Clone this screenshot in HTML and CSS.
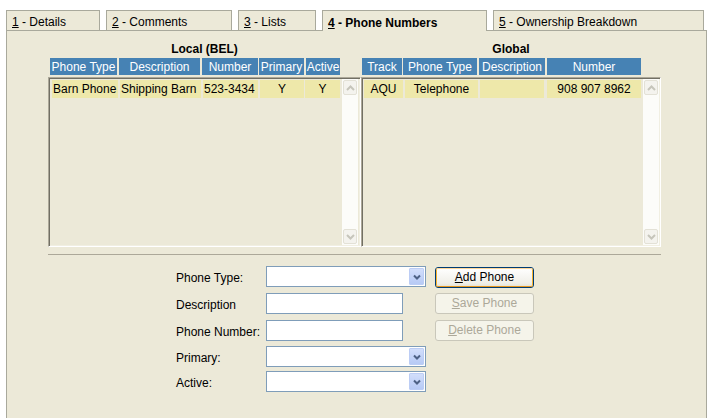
FILE: index.html
```html
<!DOCTYPE html>
<html>
<head>
<meta charset="utf-8">
<link rel="stylesheet" href="styles.css">
</head>
<body>
<div class="tabs">
  <div class="tab t1"><u>1</u> - Details</div>
  <div class="tab t2"><u>2</u> - Comments</div>
  <div class="tab t3"><u>3</u> - Lists</div>
  <div class="tab t4 active"><u>4</u> - Phone Numbers</div>
  <div class="tab t5"><u>5</u> - Ownership Breakdown</div>
</div>
<div class="panel">
  <div class="lists">
    <section class="group local">
      <h3 class="title">Local (BEL)</h3>
      <div class="heads">
        <div class="h w-pt">Phone Type</div>
        <div class="h w-desc">Description</div>
        <div class="h w-num">Number</div>
        <div class="h w-pri">Primary</div>
        <div class="h w-act">Active</div>
      </div>
      <div class="box">
        <div class="rows">
          <div class="row">
            <div class="c r-pt">Barn Phone</div>
            <div class="c r-desc">Shipping Barn</div>
            <div class="c r-num">523-3434</div>
            <div class="c r-pri ctr">Y</div>
            <div class="c r-act ctr">Y</div>
          </div>
        </div>
        <div class="vscroll">
          <div class="sbtn"><svg width="9" height="6" viewBox="0 0 9 6"><path d="M1 5 L4.5 1.5 L8 5" fill="none" stroke="#c6c5bb" stroke-width="2"/></svg></div>
          <div class="sbtn"><svg width="9" height="6" viewBox="0 0 9 6"><path d="M1 1 L4.5 4.5 L8 1" fill="none" stroke="#c6c5bb" stroke-width="2"/></svg></div>
        </div>
      </div>
    </section>
    <section class="group global">
      <h3 class="title">Global</h3>
      <div class="heads">
        <div class="h g-tr">Track</div>
        <div class="h g-pt">Phone Type</div>
        <div class="h g-desc">Description</div>
        <div class="h g-num">Number</div>
      </div>
      <div class="box">
        <div class="rows">
          <div class="row">
            <div class="c gr-tr ctr">AQU</div>
            <div class="c gr-pt ctr">Telephone</div>
            <div class="c gr-desc ctr"></div>
            <div class="c gr-num ctr">908 907 8962</div>
          </div>
        </div>
        <div class="vscroll narrow">
          <div class="sbtn"><svg width="9" height="6" viewBox="0 0 9 6"><path d="M1 5 L4.5 1.5 L8 5" fill="none" stroke="#c6c5bb" stroke-width="2"/></svg></div>
          <div class="sbtn"><svg width="9" height="6" viewBox="0 0 9 6"><path d="M1 1 L4.5 4.5 L8 1" fill="none" stroke="#c6c5bb" stroke-width="2"/></svg></div>
        </div>
      </div>
    </section>
  </div>
  <div class="sep"></div>
  <div class="form">
    <label class="lbl">Phone Type:</label>
    <div class="combo"><span class="drop"><svg width="8" height="6" viewBox="0 0 8 6"><path d="M1 1.5 L4 4.5 L7 1.5" fill="none" stroke="#4d6185" stroke-width="2"/></svg></span></div>
    <button class="btn default"><span class="inner"><u>A</u>dd Phone</span></button>

    <label class="lbl">Description</label>
    <div class="field"></div>
    <button class="btn disabled"><span class="inner"><u>S</u>ave Phone</span></button>

    <label class="lbl">Phone Number:</label>
    <div class="field"></div>
    <button class="btn disabled"><span class="inner"><u>D</u>elete Phone</span></button>

    <label class="lbl">Primary:</label>
    <div class="combo"><span class="drop"><svg width="8" height="6" viewBox="0 0 8 6"><path d="M1 1.5 L4 4.5 L7 1.5" fill="none" stroke="#4d6185" stroke-width="2"/></svg></span></div>
    <span></span>

    <label class="lbl">Active:</label>
    <div class="combo"><span class="drop"><svg width="8" height="6" viewBox="0 0 8 6"><path d="M1 1.5 L4 4.5 L7 1.5" fill="none" stroke="#4d6185" stroke-width="2"/></svg></span></div>
    <span></span>
  </div>
</div>
</body>
</html>
```
FILE: styles.css
```css
html, body {
  margin: 0;
  padding: 0;
}
body {
  width: 712px;
  height: 418px;
  overflow: hidden;
  background: #ffffff;
  font-family: "Liberation Sans", Arial, sans-serif;
  font-size: 12px;
  color: #000;
}
.tabs {
  display: flex;
  align-items: flex-end;
  gap: 6px;
  height: 30px;
  padding-left: 6px;
  box-sizing: border-box;
}
.tab {
  height: 20px;
  box-sizing: border-box;
  border: 1px solid #a9a99c;
  border-bottom: none;
  background: #ece9d8;
  padding: 4px 0 0 5px;
  line-height: 14px;
  white-space: nowrap;
}
.t1 { width: 94px; }
.t2 { width: 126px; }
.t3 { width: 78px; }
.t4 { width: 165px; }
.t5 { width: 211px; }
.tab.active {
  height: 21px;
  margin-bottom: -1px;
  position: relative;
  z-index: 2;
  font-weight: bold;
  padding-top: 5px;
}
.panel {
  margin-left: 6px;
  width: 701px;
  height: 400px;
  box-sizing: border-box;
  border: 1px solid #a9a99c;
  background: #ece9d8;
  position: relative;
  z-index: 1;
}
.lists {
  display: flex;
  padding-left: 41px;
  margin-top: 10px;
}
.group.local { width: 313px; }
.group.global { width: 300px; }
.title {
  margin: 0 0 2px 0;
  height: 15px;
  padding-top: 1px;
  box-sizing: border-box;
  line-height: 15px;
  font-size: 12px;
  font-weight: bold;
  text-align: center;
}
.heads {
  display: flex;
  height: 17px;
  margin-bottom: 2px;
}
.h {
  background: #4682b4;
  color: #fff;
  text-align: center;
  line-height: 16px;
  padding-top: 1px;
  box-sizing: border-box;
  white-space: nowrap;
  overflow: hidden;
}
.local .heads { padding-left: 2px; }
.w-pt { width: 67px; }
.w-desc { width: 81px; margin-left: 2px; }
.w-num { width: 56px; margin-left: 2px; }
.w-pri { width: 45px; margin-left: 1px; }
.w-act { width: 34px; margin-left: 2px; }
.global .heads { padding-left: 1px; }
.g-tr { width: 40px; }
.g-pt { width: 74px; margin-left: 1px; }
.g-desc { width: 66px; margin-left: 2px; }
.g-num { width: 94px; margin-left: 2px; }

.box {
  height: 170px;
  box-sizing: border-box;
  border: 1px solid;
  border-color: #aca899 #ffffff #ffffff #aca899;
  box-shadow: inset 1px 1px 0 #716f64, inset -1px -1px 0 #f1efe2;
  display: flex;
}
.rows {
  flex: 1;
  padding: 2px 0 0 3px;
}
.row {
  display: flex;
  height: 18px;
}
.c {
  background: #eee8aa;
  line-height: 17px;
  padding-top: 1px;
  white-space: nowrap;
  overflow: hidden;
  padding-left: 1px;
  box-sizing: border-box;
}
.c.ctr { text-align: center; padding-left: 0; }
.r-pt { width: 66px; }
.r-desc { width: 81px; margin-left: 2px; }
.r-num { width: 55px; margin-left: 2px; }
.r-pri { width: 44px; margin-left: 2px; }
.r-act { width: 35px; margin-left: 1px; }
.global .rows { padding-left: 2px; }
.gr-tr { width: 39px; }
.gr-pt { width: 73px; margin-left: 2px; }
.gr-desc { width: 64px; margin-left: 2px; }
.gr-num { width: 94px; margin-left: 3px; }

.vscroll {
  width: 16px;
  margin: 1px 2px 1px 0;
  background: #fcfcf9;
  display: flex;
  flex-direction: column;
  justify-content: space-between;
  align-items: center;
}
.vscroll.narrow { margin-right: 1px; }
.sbtn {
  width: 14px;
  height: 15px;
  margin: 1px 0;
  box-sizing: border-box;
  border: 1px solid #e3e1d6;
  border-radius: 2px;
  background: #f4f3ee;
  display: flex;
  align-items: center;
  justify-content: center;
}
.sep {
  margin: 7px 0 0 41px;
  width: 613px;
  height: 1px;
  background: #aca899;
}
.form {
  margin: 11px 0 0 169px;
  display: grid;
  grid-template-columns: 90px 169px 99px;
  grid-template-rows: 27px 27px 26px 25px 21px;
}
.lbl {
  height: 21px;
  padding-top: 1px;
  line-height: 22px;
  white-space: nowrap;
}
.combo, .field {
  height: 21px;
  box-sizing: border-box;
  border: 1px solid #7f9db9;
  background: #fff;
}
.combo {
  width: 160px;
  display: flex;
  justify-content: flex-end;
  padding: 1px 1px 1px 0;
}
.field { width: 137px; }
.drop {
  width: 15px;
  height: 17px;
  box-sizing: border-box;
  border: 1px solid #bccdf5;
  border-radius: 1px;
  background: linear-gradient(#d2defb, #b7caf5);
  display: flex;
  align-items: center;
  justify-content: center;
}
.btn {
  width: 99px;
  height: 21px;
  padding: 0;
  margin: 0;
  box-sizing: border-box;
  border-radius: 3px;
  font-family: "Liberation Sans", Arial, sans-serif;
  font-size: 12px;
  display: block;
}
.btn .inner {
  display: block;
  height: 100%;
  line-height: 17px;
  text-align: center;
  border-radius: 2px;
  box-sizing: border-box;
}
.btn.default {
  margin-top: 1px;
  border: 1px solid #003c74;
  background: linear-gradient(#ffffff, #f0efe8 80%, #e3e0d2);
  color: #000;
}
.btn.default .inner {
  border: 1px solid #f8b330;
  border-top-color: #ffd799;
  border-bottom-color: #e5971f;
  line-height: 17px;
}
.btn.disabled {
  border: 1px solid #c9c7ba;
  background: #f5f4ea;
  color: #aca899;
}
.btn.disabled .inner {
  line-height: 19px;
}
```
